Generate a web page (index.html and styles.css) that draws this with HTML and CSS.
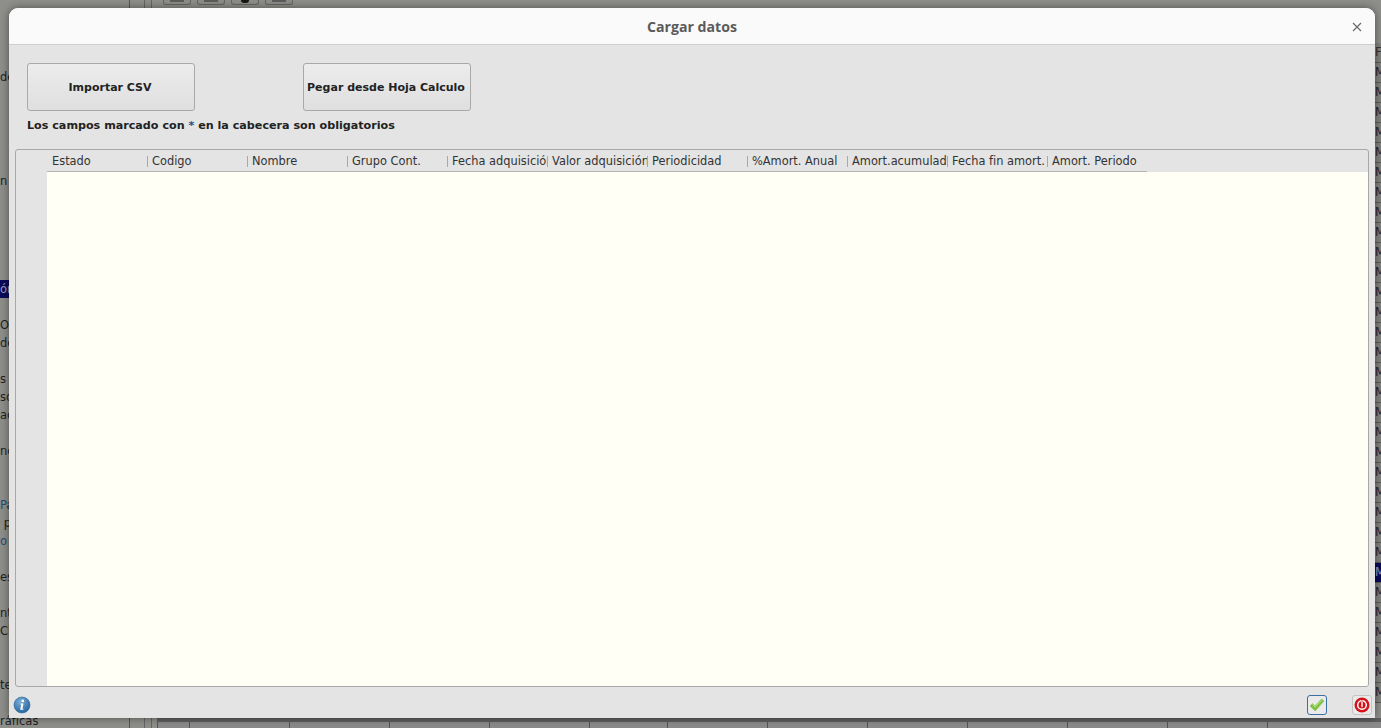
FILE: index.html
```html
<!DOCTYPE html>
<html lang="es">
<head>
<meta charset="utf-8">
<title>Cargar datos</title>
<link rel="stylesheet" href="styles.css">
</head>
<body>
<div class="app">
  <aside class="sidebar">
    <div class="side-row side-first">de</div>
    <div class="side-row side-gap-5">n</div>
    <div class="side-row side-sel side-gap-5b">ón</div>
    <div class="side-row side-gap-1">Ol</div>
    <div class="side-row">de</div>
    <div class="side-row side-gap-1">s</div>
    <div class="side-row">so</div>
    <div class="side-row">ac</div>
    <div class="side-row side-gap-1">nc</div>
    <div class="side-row side-gap-2"><span class="blue">P</span>a</div>
    <div class="side-row">&nbsp;p</div>
    <div class="side-row"><span class="blue">o</span> F</div>
    <div class="side-row side-gap-1">es</div>
    <div class="side-row side-gap-1">nt</div>
    <div class="side-row">Cl</div>
    <div class="side-row side-gap-2">te</div>
    <div class="side-row side-gap-1">ráficas</div>
  </aside>
  <div class="rails"><i></i><i></i></div>
  <main class="workspace">
    <div class="toolbar"><b></b><b></b><b class="tool-round"></b><b></b></div>
    <div class="grid-col">
      <div class="grid-row grid-head">F</div>
      <div class="grid-row">M</div><div class="grid-row">M</div><div class="grid-row">M</div><div class="grid-row">M</div><div class="grid-row">M</div>
      <div class="grid-row">M</div><div class="grid-row">M</div><div class="grid-row">M</div><div class="grid-row">M</div><div class="grid-row">M</div>
      <div class="grid-row">M</div><div class="grid-row">M</div><div class="grid-row">M</div><div class="grid-row">M</div><div class="grid-row">M</div>
      <div class="grid-row">M</div><div class="grid-row">M</div><div class="grid-row">M</div><div class="grid-row">M</div><div class="grid-row">M</div>
      <div class="grid-row">M</div><div class="grid-row">M</div><div class="grid-row">M</div><div class="grid-row">M</div><div class="grid-row">M</div>
      <div class="grid-row grid-sel">M</div>
      <div class="grid-row">M</div><div class="grid-row">M</div><div class="grid-row">M</div><div class="grid-row">M</div>
      <div class="grid-row">M</div><div class="grid-row">M</div>
    </div>
    <div class="footer-cells">
      <i class="cell-corner"></i><i></i><i></i><i></i><i></i><i class="cell-short"></i><i></i><i></i><i></i><i></i><i></i><i></i><i></i>
    </div>
  </main>
</div>

<section class="dialog" role="dialog" aria-label="Cargar datos">
  <header class="titlebar">
    <h1 class="title">Cargar datos</h1>
    <svg class="close" width="10" height="10" viewBox="0 0 10 10"><path d="M1 1l8 8M9 1l-8 8"/></svg>
  </header>
  <div class="content">
    <div class="actions">
      <button class="btn" type="button">Importar CSV</button>
      <button class="btn" type="button">Pegar desde Hoja Calculo</button>
    </div>
    <p class="note">Los campos marcado con <span class="star">*</span> en la cabecera son obligatorios</p>
    <div class="table">
      <div class="row-header"></div>
      <div class="table-main">
        <div class="thead">
          <div class="th">Estado</div>
          <div class="th">Codigo</div>
          <div class="th">Nombre</div>
          <div class="th">Grupo Cont.</div>
          <div class="th">Fecha adquisición</div>
          <div class="th">Valor adquisición</div>
          <div class="th">Periodicidad</div>
          <div class="th">%Amort. Anual</div>
          <div class="th">Amort.acumulada</div>
          <div class="th">Fecha fin amort.</div>
          <div class="th">Amort. Periodo</div>
        </div>
        <div class="tbody"></div>
      </div>
    </div>
  </div>
  <footer class="statusbar">
    <svg class="info" width="18" height="18" viewBox="0 0 18 18">
      <defs>
        <radialGradient id="ig" cx="40%" cy="30%" r="75%"><stop offset="0" stop-color="#7fb0d8"/><stop offset="1" stop-color="#20609c"/></radialGradient>
      </defs>
      <circle cx="9" cy="9" r="8" fill="url(#ig)" stroke="#2f6797" stroke-width=".6"/>
      <circle cx="9.8" cy="4.9" r="1.3" fill="#fff"/>
      <path d="M7.6 7.6h2.9l-1.1 5.2h1.1l-.2 1H7.2l1.1-5.2H7.4z" fill="#fff"/>
    </svg>
    <div class="status-actions">
      <button class="icon-btn icon-ok" type="button" aria-label="Aceptar">
        <svg width="16" height="14" viewBox="0 0 16 14"><path d="M1 8l2.6-2.4L6 8 12.6 1 15 3 6.2 13z" fill="#7fc242" stroke="#8cc65a" stroke-width=".7" stroke-linejoin="round"/><path d="M3.5 6.6L6 9 12.6 2.2" fill="none" stroke="#b6e48a" stroke-width="1"/></svg>
      </button>
      <button class="icon-btn icon-stop" type="button" aria-label="Cancelar">
        <svg width="16" height="16" viewBox="0 0 16 16"><circle cx="8" cy="8" r="7.5" fill="#d5121a"/><circle cx="8" cy="8" r="4.3" fill="none" stroke="#fff" stroke-width="1.5"/><rect x="6.9" y="3.4" width="2.2" height="7" rx="1" fill="#d5121a"/><rect x="7.3" y="4" width="1.4" height="6.2" rx=".7" fill="#fff"/></svg>
      </button>
    </div>
  </footer>
</section>
</body>
</html>
```
FILE: styles.css
```css
* { box-sizing: border-box; }
html, body { margin: 0; height: 100%; overflow: hidden; }
body {
  background: #8e8e8a;
  font-family: "DejaVu Sans", sans-serif;
  color: #222;
}

/* dimmed application behind the modal */
.app { display: flex; width: 1381px; height: 728px; overflow: hidden; }
.sidebar {
  width: 130px;
  flex: none;
  border-right: 1px solid #555;
  padding-top: 68px;
  font-size: 11.5px;
  color: #1f1f1f;
  overflow: hidden;
}
.side-row { height: 18px; line-height: 18px; white-space: nowrap; }
.side-first { margin-top: 0; }
.side-gap-5 { margin-top: 86px; }
.side-gap-5b { margin-top: 90px; }
.side-gap-1 { margin-top: 18px; }
.side-gap-2 { margin-top: 36px; }
.side-sel { background: #0a0a5a; color: #a0a0c0; }
.blue { color: #1f4f7d; }
.rails { width: 34px; flex: none; display: flex; gap: 6px; padding-left: 14px; }
.rails i { width: 1px; background: #666; }
.workspace { flex: 1; display: flex; flex-direction: column; align-items: flex-end; position: relative; min-width: 0; }
.toolbar { align-self: flex-start; display: flex; gap: 6px; margin-left: -1px; height: 10px; flex: none; }
.toolbar b {
  display: flex;
  justify-content: center;
  width: 28px;
  height: 5px;
  background: #8d8d89;
  border: 1px solid #666;
  border-top: 0;
  border-radius: 0 0 3px 3px;
}
.toolbar b::after { content: ""; width: 14px; height: 2px; background: #5c5c5c; }
.toolbar .tool-round::after { width: 8px; height: 3px; background: #161616; border-radius: 0 0 4px 4px; }
.grid-col { width: 6px; padding-top: 33px; flex: none; overflow: hidden; font-size: 11.5px; color: #15263a; }
.grid-row { height: 20px; line-height: 19px; border-bottom: 1px solid #5a5a5a; background: #82827e; }
.grid-head { color: #333; }
.grid-sel { background: #0a0a5a; color: #a0a0c0; }
.footer-cells { position: absolute; left: -7px; right: 0; bottom: 0; height: 10px; display: flex; background: #8a8a8a; border-top: 4px solid #5f5f5f; }
.footer-cells i { width: 100px; flex: none; border-left: 1px solid #555; }
.footer-cells .cell-corner { width: 32px; }
.footer-cells .cell-short { width: 78px; }

/* modal */
.dialog {
  position: absolute;
  left: 9px;
  top: 8px;
  width: 1366px;
  height: 710px;
  display: flex;
  flex-direction: column;
  background: #e4e4e4;
  border-radius: 9px 9px 0 0;
  box-shadow: 0 0 9px rgba(0, 0, 0, .45);
  overflow: hidden;
}
.titlebar {
  height: 37px;
  flex: none;
  display: flex;
  align-items: center;
  justify-content: center;
  position: relative;
  background: #fafafa;
  border-bottom: 1px solid #cfcfcf;
}
.title { margin: 0; font-size: 14.15px; font-weight: 700; color: #5b5b5b; font-family: "Open Sans", sans-serif; }
.close { position: absolute; right: 13px; top: 14px; }
.close path { stroke: #6a6a6a; stroke-width: 1.2; fill: none; }
.content { flex: 1; min-height: 0; display: flex; flex-direction: column; padding: 18px 6px 0; }
.actions { display: flex; gap: 108px; padding-left: 12px; }
.btn {
  width: 168px;
  height: 48px;
  padding: 0 2px 0 0;
  font: 700 11px "DejaVu Sans", sans-serif;
  color: #222;
  background: linear-gradient(#ececec, #dfdfdf);
  border: 1px solid #a9a9a9;
  border-radius: 3px;
}
.note { margin: 8px 0 0 12px; height: 14px; line-height: 14px; font-size: 11.15px; font-weight: 700; color: #222; }
.star { color: #1d4f82; }
.table {
  flex: 1;
  min-height: 0;
  display: flex;
  margin-top: 16px;
  border: 1px solid #a8a8a8;
  border-radius: 3px;
  overflow: hidden;
}
.row-header { width: 31px; flex: none; }
.table-main { flex: 1; min-width: 0; display: flex; flex-direction: column; }
.thead { display: flex; flex: none; width: 1100px; height: 22px; border-bottom: 1px solid #b4b4b4; }
.th {
  width: 100px;
  flex: none;
  overflow: hidden;
  white-space: nowrap;
  padding-left: 5px;
  font-size: 11.4px;
  line-height: 23px;
  color: #333;
  position: relative;
}
.th + .th::before {
  content: "";
  position: absolute;
  left: 0;
  top: 6px;
  height: 11px;
  width: 1px;
  background: #a8a8a8;
}
.tbody { flex: 1; background: #fffff6; }
.statusbar { height: 31px; flex: none; display: flex; align-items: center; justify-content: space-between; padding: 5px 3px 0 4px; }
.info { display: block; }
.status-actions { display: flex; gap: 25px; align-items: center; }
.icon-btn { width: 20px; height: 20px; padding: 0; display: flex; align-items: center; justify-content: center; background: #eaeaea; border-radius: 3px; }
.icon-ok { border: 1px solid #3a6ea5; }
.icon-stop { border: 1px solid #c4c4c4; }
```
